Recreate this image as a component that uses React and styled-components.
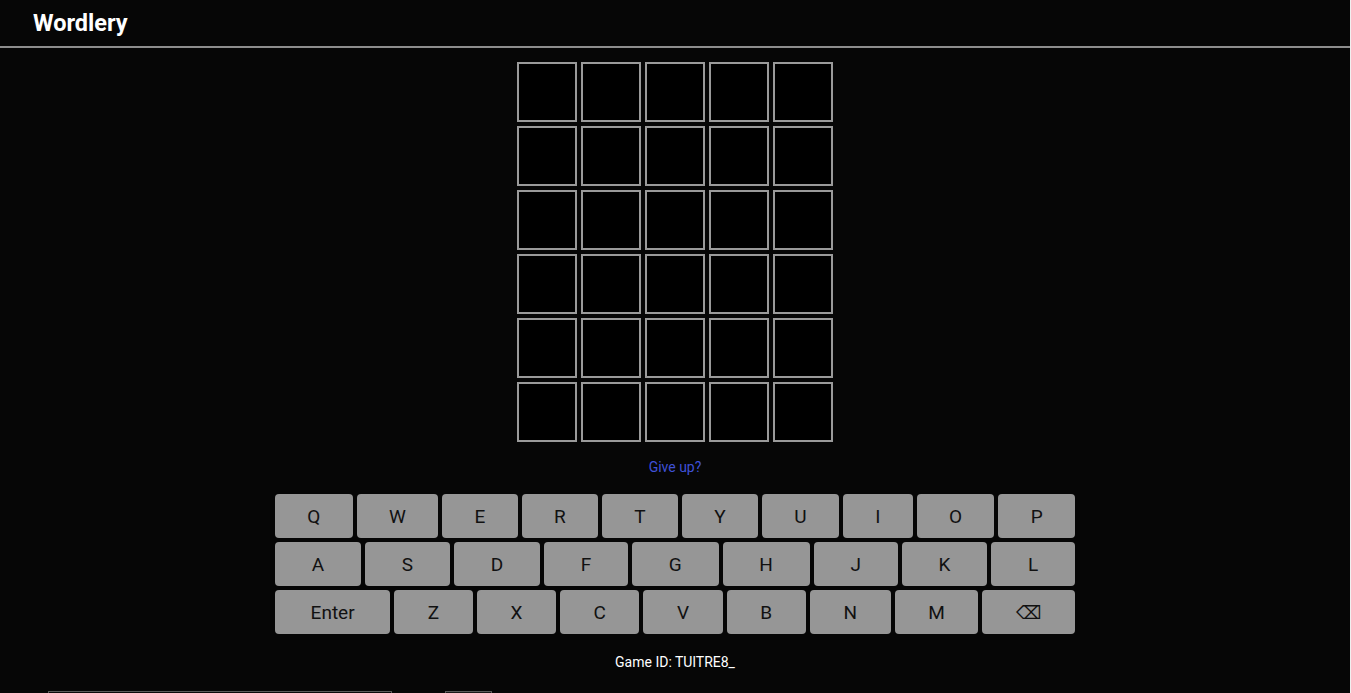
import React from "react";
import styled, { createGlobalStyle } from "styled-components";

const ROWS = [
  ["Q", "W", "E", "R", "T", "Y", "U", "I", "O", "P"],
  ["A", "S", "D", "F", "G", "H", "J", "K", "L"],
  ["Enter", "Z", "X", "C", "V", "B", "N", "M", "⌫"],
];

export default function App() {
  const board = Array.from({ length: 6 }, () => Array(5).fill(""));
  return (
    <>
      <GlobalStyle />
      <Page>
        <Header>
          <Logo>Wordlery</Logo>
        </Header>
        <Main>
          <Board>
            {board.map((row, r) =>
              row.map((letter, c) => <Tile key={`${r}-${c}`}>{letter}</Tile>)
            )}
          </Board>
          <GiveUp href="#">Give up?</GiveUp>
          <Keyboard>
            {ROWS.map((row, i) => (
              <KeyRow key={i}>
                {row.map((k) => (
                  <Key key={k} $symbol={k === "⌫"} $wide={k === "Enter"}>
                    {k}
                  </Key>
                ))}
              </KeyRow>
            ))}
          </Keyboard>
          <GameId>Game ID: TUlTRE8_</GameId>
          <ShareForm>
            <ShareInput readOnly value="" aria-label="Game link" />
            <ShareButton type="button" aria-label="Copy" />
          </ShareForm>
        </Main>
      </Page>
    </>
  );
}

const GlobalStyle = createGlobalStyle`
  html, body {
    margin: 0;
    padding: 0;
    background: #f0f0f0;
  }
  body {
    font-family: Roboto, "Liberation Sans", sans-serif;
  }
`;

const Page = styled.div`
  width: calc(100vw - 1px);
  min-height: 100vh;
  background: #060606;
  color: #fff;
`;

const Header = styled.header`
  height: 46px;
  display: flex;
  align-items: center;
  padding: 0 33px;
  border-bottom: 2px solid #8c8c8c;
`;

const Logo = styled.h1`
  margin: 0;
  font-size: 23.5px;
  font-weight: 700;
  color: #fff;
`;

const Main = styled.main`
  display: flex;
  flex-direction: column;
  align-items: center;
  padding-top: 14px;
`;

const Board = styled.div`
  display: grid;
  grid-template-columns: repeat(5, 60px);
  grid-auto-rows: 60px;
  gap: 4px;
`;

const Tile = styled.div`
  box-sizing: border-box;
  border: 2px solid #9a9a9a;
  background: #000;
  display: flex;
  align-items: center;
  justify-content: center;
  font-size: 28px;
  font-weight: 700;
`;

const GiveUp = styled.a`
  margin-top: 17px;
  font-size: 14px;
  line-height: 16px;
  color: #3f51d6;
  text-decoration: none;
`;

const Keyboard = styled.div`
  width: 800px;
  margin-top: 19px;
  display: flex;
  flex-direction: column;
  gap: 4px;
`;

const KeyRow = styled.div`
  display: flex;
  gap: 4px;
`;

const Key = styled.button`
  flex: 1 1 auto;
  height: 44px;
  padding: 0 ${(p) => (p.$wide ? "2px" : "0")};
  border: none;
  border-radius: 4px;
  background: #969696;
  color: #111;
  font-family: ${(p) =>
    p.$symbol ? '"DejaVu Sans", sans-serif' : 'Roboto, "Liberation Sans", sans-serif'};
  font-size: ${(p) => (p.$symbol ? "18px" : "19px")};
  cursor: pointer;
`;

const GameId = styled.div`
  margin-top: 20px;
  font-size: 14px;
  line-height: 16px;
  color: #fff;
`;

const ShareForm = styled.form`
  align-self: flex-start;
  margin: 21px 0 0 48px;
  display: flex;
  gap: 53px;
`;

const ShareInput = styled.input`
  width: 344px;
  height: 30px;
  box-sizing: border-box;
  border: 1px solid #5a5a5a;
  background: #0a0a0a;
`;

const ShareButton = styled.button`
  width: 47px;
  height: 30px;
  border: 1px solid #5a5a5a;
  background: #1a1a1a;
`;
